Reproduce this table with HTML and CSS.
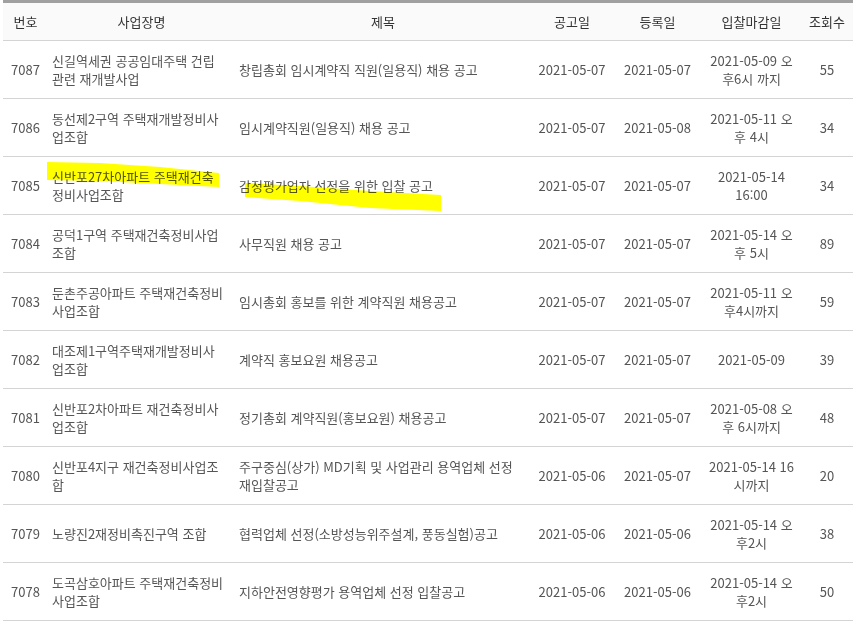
FILE: index.html
```html
<!DOCTYPE html>
<html lang="ko">
<head>
<meta charset="utf-8">
<title>입찰공고 목록</title>
<link rel="stylesheet" href="styles.css">
</head>
<body>
<div class="page">
<table class="list">
  <colgroup>
    <col class="c-no"><col class="c-site"><col class="c-title"><col class="c-date"><col class="c-reg"><col class="c-due"><col class="c-view">
  </colgroup>
  <thead>
    <tr><th>번호</th><th>사업장명</th><th>제목</th><th>공고일</th><th>등록일</th><th>입찰마감일</th><th>조회수</th></tr>
  </thead>
  <tbody>
    <tr><td class="num">7087</td><td class="site">신길역세권 공공임대주택 건립<br>관련 재개발사업</td><td class="title">창립총회 임시계약직 직원(일용직) 채용 공고</td><td class="c">2021-05-07</td><td class="c">2021-05-07</td><td class="c">2021-05-09 오<br>후6시 까지</td><td class="c">55</td></tr>
    <tr><td class="num">7086</td><td class="site">동선제2구역 주택재개발정비사<br>업조합</td><td class="title">임시계약직원(일용직) 채용 공고</td><td class="c">2021-05-07</td><td class="c">2021-05-08</td><td class="c">2021-05-11 오<br>후 4시</td><td class="c">34</td></tr>
    <tr><td class="num">7085</td><td class="site">신반포27차아파트 주택재건축<br>정비사업조합</td><td class="title">감정평가업자 선정을 위한 입찰 공고</td><td class="c">2021-05-07</td><td class="c">2021-05-07</td><td class="c">2021-05-14<br>16:00</td><td class="c">34</td></tr>
    <tr><td class="num">7084</td><td class="site">공덕1구역 주택재건축정비사업<br>조합</td><td class="title">사무직원 채용 공고</td><td class="c">2021-05-07</td><td class="c">2021-05-07</td><td class="c">2021-05-14 오<br>후 5시</td><td class="c">89</td></tr>
    <tr><td class="num">7083</td><td class="site">둔촌주공아파트 주택재건축정비<br>사업조합</td><td class="title">임시총회 홍보를 위한 계약직원 채용공고</td><td class="c">2021-05-07</td><td class="c">2021-05-07</td><td class="c">2021-05-11 오<br>후4시까지</td><td class="c">59</td></tr>
    <tr><td class="num">7082</td><td class="site">대조제1구역주택재개발정비사<br>업조합</td><td class="title">계약직 홍보요원 채용공고</td><td class="c">2021-05-07</td><td class="c">2021-05-07</td><td class="c">2021-05-09</td><td class="c">39</td></tr>
    <tr><td class="num">7081</td><td class="site">신반포2차아파트 재건축정비사<br>업조합</td><td class="title">정기총회 계약직원(홍보요원) 채용공고</td><td class="c">2021-05-07</td><td class="c">2021-05-07</td><td class="c">2021-05-08 오<br>후 6시까지</td><td class="c">48</td></tr>
    <tr><td class="num">7080</td><td class="site">신반포4지구 재건축정비사업조<br>합</td><td class="title">주구중심(상가) MD기획 및 사업관리 용역업체 선정<br>재입찰공고</td><td class="c">2021-05-06</td><td class="c">2021-05-07</td><td class="c">2021-05-14 16<br>시까지</td><td class="c">20</td></tr>
    <tr><td class="num">7079</td><td class="site">노량진2재정비촉진구역 조합</td><td class="title">협력업체 선정(소방성능위주설계, 풍동실험)공고</td><td class="c">2021-05-06</td><td class="c">2021-05-06</td><td class="c">2021-05-14 오<br>후2시</td><td class="c">38</td></tr>
    <tr><td class="num">7078</td><td class="site">도곡삼호아파트 주택재건축정비<br>사업조합</td><td class="title">지하안전영향평가 용역업체 선정 입찰공고</td><td class="c">2021-05-06</td><td class="c">2021-05-06</td><td class="c">2021-05-14 오<br>후2시</td><td class="c">50</td></tr>
  </tbody>
</table>
<svg class="marker" width="865" height="623" viewBox="0 0 865 623" aria-hidden="true">
  <polygon points="47,162 100,163 160,167 219,173 219,187 160,184 100,181 47,180" fill="#ffff00"/>
  <polygon points="245,183 300,186 370,191 441,195 441,211 370,208 300,201 245,197" fill="#ffff00"/>
</svg>
</div>
</body>
</html>
```

FILE: styles.css
```css
html, body {
  margin: 0;
  padding: 0;
  background: #ffffff;
}

.page {
  position: relative;
  width: 865px;
  height: 623px;
  overflow: hidden;
}

.list {
  margin-left: 3px;
  width: 850px;
  table-layout: fixed;
  border-collapse: collapse;
  border-top: 3px solid #a0a0a0;
  font-family: "Malgun Gothic", "Noto Sans CJK KR", "Noto Sans", sans-serif;
  font-size: 13px;
  color: #555555;
}

.c-no { width: 45px; }
.c-site { width: 187px; }
.c-title { width: 296px; }
.c-date { width: 82px; }
.c-reg { width: 89px; }
.c-due { width: 99px; }
.c-view { width: 52px; }

.list th {
  height: 37px;
  padding: 0;
  background: #fafafa;
  color: #333333;
  font-weight: normal;
  text-align: center;
  border-bottom: 1px solid #d4d4d4;
  line-height: 18px;
}

.list td {
  height: 57px;
  padding: 0 4px;
  border-bottom: 1px solid #d4d4d4;
  line-height: 18px;
  vertical-align: middle;
  white-space: nowrap;
}

.list td.num {
  text-align: center;
  padding: 0;
}

.list td.site {
  text-align: left;
}

.list td.title {
  text-align: left;
  padding-left: 4px;
}

.list td.c {
  text-align: center;
  padding: 0;
}

.marker {
  position: absolute;
  left: 0;
  top: 0;
  pointer-events: none;
  mix-blend-mode: multiply;
}
```
